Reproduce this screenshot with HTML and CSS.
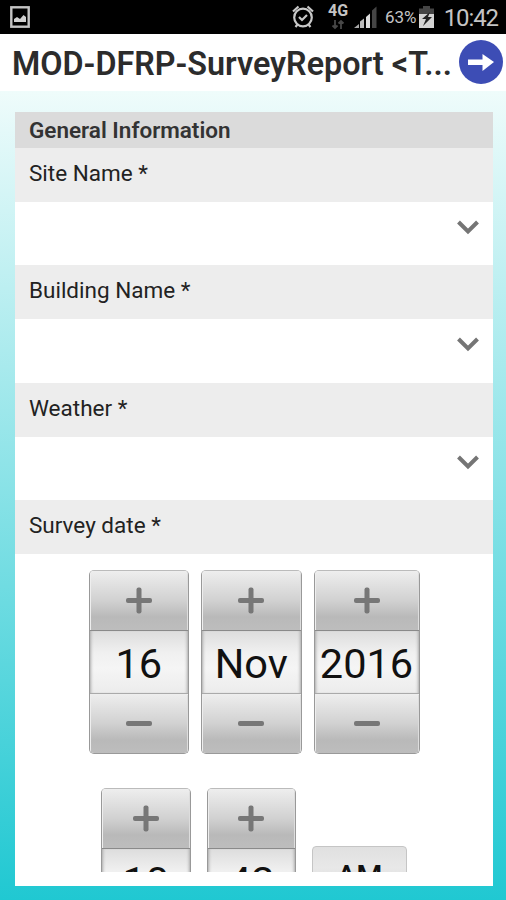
FILE: index.html
```html
<!DOCTYPE html>
<html lang="en">
<head>
<meta charset="utf-8">
<title>MOD-DFRP-SurveyReport</title>
<link rel="stylesheet" href="styles.css">
</head>
<body>
<div class="screen">
  <div class="status">
    <svg class="photo" width="20" height="22" viewBox="0 0 20 22"><rect x="1.3" y="1.3" width="17.4" height="19.4" fill="none" stroke="#c4c4c4" stroke-width="2.4"/><path d="M4 16v-3l3-2 3 2 3.500-4 2.500 2v5z" fill="#d0d0d0"/></svg>
    <svg class="alarm" width="22" height="24" viewBox="0 0 22 24" fill="none" stroke="#c8c8c8" stroke-width="2.200"><circle cx="11" cy="12.500" r="8.800"/><path d="M1 6.500l5.500-5M21 6.500l-5.500-5M5.500 19.500L3.500 22M16.500 19.500l2 2.500M7 12l3 3 5-5"/></svg>
    <div class="network"><span>4G</span><svg width="14" height="10" viewBox="0 0 14 10" fill="none" stroke="#484848" stroke-width="1.800"><path d="M4 0v8M1.500 5.500L4 8l2.500-2.500M10 9V1M7.500 3.500L10 1l2.500 2.500"/></svg></div>
    <svg class="signal" width="23" height="22" viewBox="0 0 23 22"><path d="M0 22l5-4v4z" fill="#aaa"/><path d="M6 15.500l4-3V22H6z" fill="#bbb"/><path d="M12 11l4-3.500V22h-4z" fill="#ddd"/><path d="M18 4.500l4.500-4V22H18z" fill="#454545"/></svg>
    <span class="percent">63%</span>
    <svg class="battery" width="15" height="22" viewBox="0 0 15 22"><path d="M4 0h7v2.500h4V9H0V2.500h4z" fill="#454545"/><path d="M0 8h15v14H0z" fill="#d4d4d4"/><path d="M11 6L3 13h4l-3 7 9-9H9z" fill="#222"/></svg>
    <span class="clock">10:42</span>
  </div>
  <header class="titlebar">
    <h1>MOD-DFRP-SurveyReport &lt;T...</h1>
    <svg class="next" width="44" height="44" viewBox="0 0 44 44"><circle cx="22" cy="22" r="22" fill="#3d4db5"/><path d="M9 19.500h14.500V14L35 22 23.500 31v-6H9z" fill="#fff"/></svg>
  </header>
  <main class="page">
    <section class="card">
      <div class="scroll">
        <h2>General Information</h2>
        <div class="label">Site Name *</div>
        <div class="select"><svg width="22" height="16" viewBox="0 0 22 16"><path d="M1.500 2L11 11.500 20.500 2" /></svg></div>
        <div class="label">Building Name *</div>
        <div class="select"><svg width="22" height="16" viewBox="0 0 22 16"><path d="M1.500 2L11 11.500 20.500 2" /></svg></div>
        <div class="label">Weather *</div>
        <div class="select"><svg width="22" height="16" viewBox="0 0 22 16"><path d="M1.500 2L11 11.500 20.500 2" /></svg></div>
        <div class="label">Survey date *</div>
        <div class="dates">
          <div class="picker"><div class="step plus"></div><div class="value">16</div><div class="step minus"></div></div>
          <div class="picker"><div class="step plus"></div><div class="value">Nov</div><div class="step minus"></div></div>
          <div class="picker year"><div class="step plus"></div><div class="value">2016</div><div class="step minus"></div></div>
        </div>
        <div class="times">
          <div class="picker time"><div class="step plus"></div><div class="value">10</div><div class="step minus"></div></div>
          <div class="picker time"><div class="step plus"></div><div class="value">42</div><div class="step minus"></div></div>
          <div class="ampm">AM</div>
        </div>
      </div>
    </section>
  </main>
</div>
</body>
</html>
```
FILE: styles.css
```css
* { box-sizing: border-box; }
body { margin: 0; font-family: Roboto, "Liberation Sans", sans-serif; color: #222; }
h1, h2 { margin: 0; }
svg { display: block; flex: none; }
.screen { width: 506px; height: 900px; overflow: hidden; display: flex; flex-direction: column; background: #fff; }
.status { height: 34px; flex: none; background: #000; display: flex; align-items: flex-start; padding: 6px 8px 0 10px; color: #c4c4c4; }
.alarm { margin: -1px 0 0 262px; }
.network { width: 20px; margin: -3px 0 0 14px; display: flex; flex-direction: column; align-items: center; font-size: 16px; font-weight: 700; line-height: 16px; }
.network svg { margin-top: 1px; }
.signal { margin-left: 6px; }
.percent { width: 33px; margin-left: 8px; font-size: 17px; line-height: 23px; }
.battery { margin-left: 2px; }
.clock { margin-left: 10px; font-size: 24px; line-height: 24px; white-space: nowrap; letter-spacing: -1.100px; }
.titlebar { height: 56.500px; flex: none; display: flex; align-items: center; justify-content: space-between; padding: 0 3px 0 12px; background: #fff; }
h1 { font-size: 32.300px; font-weight: 600; line-height: 56px; padding-top: 3px; white-space: nowrap; color: #2c2c2c; }
.page { height: 809.500px; flex: none; padding: 21px 13px 14px 15px; background: linear-gradient(#effcfb 0, #e4f9f9 5%, #20c8d2 100%); }
.card { height: 100%; padding-bottom: 14px; background: #fff; }
.scroll { height: 100%; overflow: hidden; }
h2 { height: 36.500px; padding-left: 14px; background: #dbdbdb; font-size: 22.500px; font-weight: 600; line-height: 36px; color: #333; }
.label { height: 54px; padding-left: 14px; background: #ededed; font-size: 22.500px; line-height: 50.500px; }
.select { height: 63.350px; display: flex; justify-content: flex-end; padding: 18px 14px 0 0; }
.select path { fill: none; stroke: #757575; stroke-width: 4; }
.dates { display: flex; gap: 12px; padding: 16px 0 0 73.500px; }
.times { display: flex; gap: 16px; padding: 34px 0 0 86px; }
.picker { width: 100.500px; height: 184px; flex: none; display: flex; flex-direction: column; border: 1.500px solid #999; border-top-color: #bbb; border-radius: 5px; overflow: hidden; }
.year { width: 106px; }
.time { width: 89.500px; }
.step { height: 59px; background: linear-gradient(#eee, #d1d1d1 50%, #b9b9b9 78%, #bdbdbd); display: flex; align-items: center; justify-content: center; position: relative; box-shadow: inset 1px 1px #eee, inset -1px 0 #ddd; }
.step::before, .plus::after { content: ""; width: 26px; height: 5px; border-radius: 2px; background: #777; }
.plus::after { position: absolute; transform: rotate(90deg); }
.value { height: 64px; border-top: 1.500px solid #8a8a8a; border-bottom: 1px solid #aaa; background: linear-gradient(#ddd, #f0f0f0 35%, #f5f5f5 60%, #ececec); box-shadow: inset 3px 0 3px -2px #aaa, inset -3px 0 3px -2px #aaa; text-align: center; white-space: nowrap; font-size: 41.500px; line-height: 66px; color: #111; display: flex; justify-content: center; }
.ampm { width: 95px; height: 70px; margin-top: 58px; border: 1px solid #c5c5c5; border-radius: 4px; background: linear-gradient(#e0e0e0, #e8e8e8 30%, #ccc); text-align: center; font-size: 30px; font-weight: 500; line-height: 57px; color: #111; }
```
